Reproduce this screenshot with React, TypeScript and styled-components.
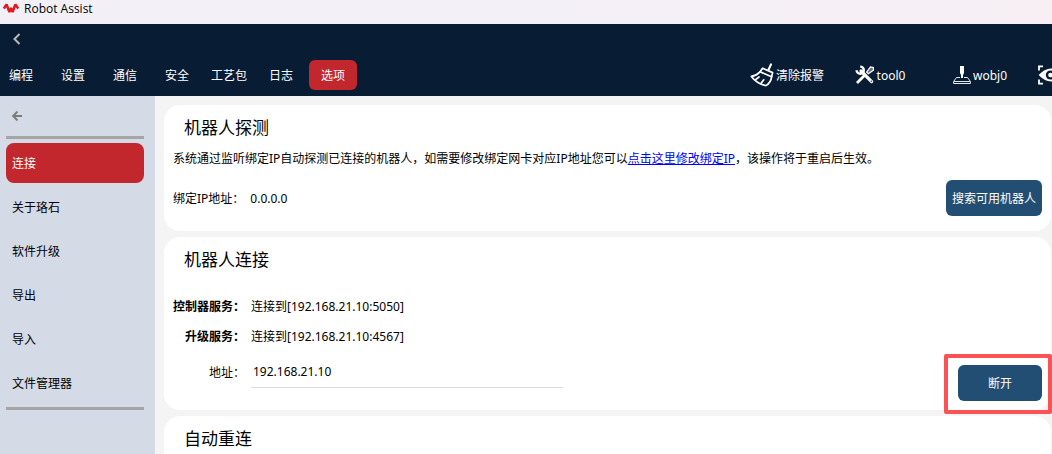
import React, { useState } from "react";
import styled, { createGlobalStyle } from "styled-components";

const GlobalStyle = createGlobalStyle`
  * { box-sizing: border-box; }
  body {
    margin: 0;
    color: #000;
    background: #f4f4f4;
    font: 12px/18px "Noto Sans", "Noto Sans CJK SC", sans-serif;
  }
  button, input { font: inherit; color: inherit; }
  button { border: 0; background: none; padding: 0; white-space: nowrap; cursor: pointer; }
  svg { display: block; flex: none; }
`;

const Window = styled.div`
  display: flex;
  flex-direction: column;
  min-height: 100vh;
`;

const TitleBar = styled.div`
  display: flex;
  gap: 5px;
  height: 24px;
  padding: 0 3px;
  background: linear-gradient(90deg, #f2f0f6, #f4f0f8 50%, #f7eff4);
`;

const AppName = styled.span`
  font-family: "Open Sans", "Noto Sans", sans-serif;
`;

const Header = styled.header`
  height: 72px;
  overflow: hidden;
  color: #fff;
  background: #081c34;
`;

const BackButton = styled.button`
  display: flex;
  align-items: center;
  height: 30px;
  padding: 0 12px;
`;

const Toolbar = styled.div`
  display: flex;
  justify-content: space-between;
  align-items: center;
  padding-top: 6px;
`;

const Nav = styled.nav`
  display: flex;
  gap: 4px;
  margin-left: -3px;
`;

const NavButton = styled.button<{ $active?: boolean }>`
  min-width: 48px;
  height: 30px;
  padding-top: 2px;
  border-radius: 6px;
  background: ${(p) => (p.$active ? "#c1272d" : "transparent")};
`;

const Status = styled.div`
  display: grid;
  grid-template-columns: 86px 100px 100px 22px;
`;

const StatusButton = styled.button`
  display: flex;
  justify-content: center;
  align-items: center;
  gap: 2px;
  height: 30px;
  span { padding-top: 2px; }
`;

const ViewButton = styled(StatusButton)`
  justify-content: flex-start;
  padding-left: 8px;
`;

const Body = styled.div`
  display: flex;
  flex: 1;
`;

const Sidebar = styled.aside`
  flex: none;
  width: 155px;
  padding: 0 11px 0 6px;
  background: #d4dbe6;
`;

const SideBack = styled.button`
  display: flex;
  align-items: center;
  height: 40px;
  padding: 0 6px;
`;

const SideMenu = styled.nav`
  display: flex;
  flex-direction: column;
  gap: 4px;
  padding: 4px 0;
  border: solid #a5a5a5;
  border-width: 3px 0;
`;

const SideButton = styled.button<{ $active?: boolean }>`
  height: 40px;
  padding: 2px 6px 0;
  border-radius: 8px;
  text-align: left;
  color: ${(p) => (p.$active ? "#fff" : "#000")};
  background: ${(p) => (p.$active ? "#c1272d" : "transparent")};
`;

const Main = styled.main`
  display: flex;
  flex: 1;
  flex-direction: column;
  gap: 6px;
  min-width: 0;
  padding: 9px 1px 0 9px;
`;

const Card = styled.section`
  padding: 11px 9px 9px;
  border-radius: 16px;
  background: #fff;
`;

const LastCard = styled(Card)`
  flex: 1;
  padding-bottom: 3px;
  border-radius: 16px 16px 0 0;
`;

const CardTitle = styled.h2`
  margin: 0 11px;
  font-size: 17px;
  font-weight: 400;
  line-height: 24px;
`;

const Note = styled.p`
  margin: 10px 0 12px;
`;

const NoteLink = styled.a`
  color: #00f;
`;

const BindRow = styled.div`
  display: flex;
  justify-content: space-between;
  align-items: center;
  padding-bottom: 6px;
`;

const BindInfo = styled.div`
  display: flex;
  gap: 6px;
  padding-top: 2px;
`;

const PrimaryButton = styled.button`
  height: 36px;
  min-width: 84px;
  padding: 2px 6px 0;
  border-radius: 6px;
  color: #fff;
  background: #234e74;
`;

const ConnectRow = styled.div`
  display: flex;
  justify-content: space-between;
  align-items: flex-end;
`;

const Fields = styled.div`
  display: grid;
  flex: 1;
  grid-template-columns: 72px minmax(0, 312px);
  column-gap: 6px;
  grid-auto-rows: 30px;
  align-items: center;
  padding: 20px 0 19px;
`;

const FieldLabel = styled.span`
  text-align: right;
  font-weight: 700;
`;

const AddressLabel = styled.label`
  padding-top: 12px;
  text-align: right;
`;

const AddressInput = styled.input`
  height: 32px;
  margin-top: 10px;
  padding: 0 2px;
  border: 0;
  border-bottom: 1px solid #dcdcdc;
  outline: 0;
  background: transparent;
`;

const Highlight = styled.div`
  position: relative;
  &::after {
    content: "";
    position: absolute;
    inset: -11px -10px -13px -14px;
    z-index: 1;
    border: 4px solid #fd5254;
    border-radius: 2px;
    pointer-events: none;
  }
`;

const Logo = () => (
  <svg width="16" height="18" viewBox="0 0 16 18" fill="none" stroke="#df1920" strokeWidth="2.5" strokeLinejoin="bevel">
    <path d="M.8 8.6 L3.6 4.4 L6.4 12 L8 8 L9.6 12 L12.4 4.4 L15.2 8.6" />
  </svg>
);

const Chevron = () => (
  <svg width="9" height="12" viewBox="0 0 9 12" fill="none" stroke="#b9b9b9" strokeWidth="2">
    <path d="M7.5 1 L2.5 6 L7.5 11" />
  </svg>
);

const ArrowLeft = () => (
  <svg width="10" height="10" viewBox="0 0 10 10" fill="none" stroke="#7b7b7b" strokeWidth="2">
    <path d="M5.4 .6 L1.2 5 L5.4 9.4 M1.5 5 H10" />
  </svg>
);

const Broom = () => (
  <svg width="24" height="24" viewBox="0 0 24 24" fill="none" stroke="#fff" strokeWidth="1.7" strokeLinejoin="round" strokeLinecap="round">
    <path d="M21 1.4 L18.6 6.6" strokeWidth="2.2" />
    <path d="M12.6 5.2 L22.6 9.6 L21.6 13.8 L10 8.8 Z" />
    <path d="M10 8.8 C7.6 11.4 4.8 12.8 1.4 13.4 C5 18.2 10 21.2 16 22.6 C19.4 20.4 21.2 17.6 21.6 13.8" />
    <path d="M5.6 16.6 L9 14 M11 20.2 L13.8 16.8" />
  </svg>
);

const Tools = () => (
  <svg width="20" height="20" viewBox="0 0 20 20" fill="none" stroke="#fff">
    <path d="M6 6 L16.6 16.6" strokeWidth="3.2" strokeLinecap="round" />
    <path d="M5.2 1.6 A3.6 3.6 0 1 1 1.6 5.2" strokeWidth="2.4" />
    <path d="M2 18 L9.4 10.6" strokeWidth="2.8" />
    <path d="M11.6 7.2 L15.4 2 L18.4 2.6 L18.4 5.2 L13.4 8.8 Z" strokeWidth="1.2" fill="#65758a" />
    <path d="M16.2 16.2 h.1" stroke="#081c34" strokeWidth="1.3" strokeLinecap="round" />
  </svg>
);

const WorkObject = () => (
  <svg width="18" height="20" viewBox="0 0 18 20">
    <path d="M7 1 H11 V8 L10 10 V13 H8 V10 L7 8 Z" fill="#fff" />
    <path d="M7 12.5 H3.5 L.6 16.5 V18.5 H17.4 V16.5 L14.5 12.5 H11 M1 16.5 H17" fill="none" stroke="#e4e8ed" strokeWidth="1" />
  </svg>
);

const EyeFrame = () => (
  <svg width="26" height="20" viewBox="0 0 26 20" fill="none" stroke="#fff" strokeWidth="1.8">
    <path d="M1 5.4 V1.4 H5 M1 14.6 V18.6 H5 M21 1.4 H25 V5.4 M21 18.6 H25 V14.6" />
    <path d="M.6 10 Q13 -3 25.4 10 Q13 23 .6 10 Z" fill="#fff" stroke="none" />
    <circle cx="12.4" cy="10" r="4.6" fill="#081c34" stroke="none" />
    <circle cx="12.4" cy="10" r="2.2" fill="#fff" stroke="none" />
  </svg>
);

const tabs = ["编程", "设置", "通信", "安全", "工艺包", "日志", "选项"];
const sections = ["连接", "关于珞石", "软件升级", "导出", "导入", "文件管理器"];

export default function App() {
  const [tab, setTab] = useState("选项");
  const [section, setSection] = useState("连接");
  const [address, setAddress] = useState("192.168.21.10");

  return (
    <Window lang="zh-CN">
      <GlobalStyle />
      <TitleBar>
        <Logo />
        <AppName>Robot Assist</AppName>
      </TitleBar>
      <Header>
        <BackButton aria-label="返回"><Chevron /></BackButton>
        <Toolbar>
          <Nav>
            {tabs.map((name) => (
              <NavButton key={name} $active={name === tab} onClick={() => setTab(name)}>{name}</NavButton>
            ))}
          </Nav>
          <Status>
            <StatusButton><Broom /><span>清除报警</span></StatusButton>
            <StatusButton><Tools /><span>tool0</span></StatusButton>
            <StatusButton><WorkObject /><span>wobj0</span></StatusButton>
            <ViewButton aria-label="视图"><EyeFrame /></ViewButton>
          </Status>
        </Toolbar>
      </Header>
      <Body>
        <Sidebar>
          <SideBack aria-label="收起"><ArrowLeft /></SideBack>
          <SideMenu>
            {sections.map((name) => (
              <SideButton key={name} $active={name === section} onClick={() => setSection(name)}>{name}</SideButton>
            ))}
          </SideMenu>
        </Sidebar>
        <Main>
          <Card>
            <CardTitle>机器人探测</CardTitle>
            <Note>
              系统通过监听绑定IP自动探测已连接的机器人，如需要修改绑定网卡对应IP地址您可以<NoteLink href="#bind">点击这里修改绑定IP</NoteLink>，该操作将于重启后生效。
            </Note>
            <BindRow>
              <BindInfo><span>绑定IP地址：</span><span>0.0.0.0</span></BindInfo>
              <PrimaryButton>搜索可用机器人</PrimaryButton>
            </BindRow>
          </Card>
          <Card>
            <CardTitle>机器人连接</CardTitle>
            <ConnectRow>
              <Fields>
                <FieldLabel>控制器服务：</FieldLabel>
                <span>连接到[192.168.21.10:5050]</span>
                <FieldLabel>升级服务：</FieldLabel>
                <span>连接到[192.168.21.10:4567]</span>
                <AddressLabel htmlFor="address">地址：</AddressLabel>
                <AddressInput id="address" value={address} onChange={(e) => setAddress(e.target.value)} />
              </Fields>
              <Highlight>
                <PrimaryButton>断开</PrimaryButton>
              </Highlight>
            </ConnectRow>
          </Card>
          <LastCard>
            <CardTitle>自动重连</CardTitle>
          </LastCard>
        </Main>
      </Body>
    </Window>
  );
}
